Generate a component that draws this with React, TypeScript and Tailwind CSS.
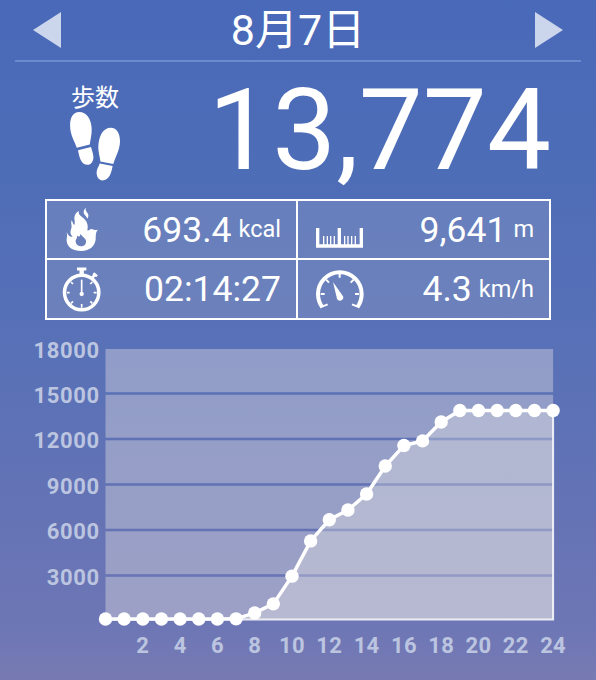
import type { ReactNode } from 'react';

// cumulative steps at each hour, 0 to 24
const steps = [
  0, 0, 0, 0, 0, 0, 0, 10, 400, 1000, 2830, 5160, 6560, 7200, 8260, 10110, 11460, 11770, 13020,
  13774, 13774, 13774, 13774, 13774, 13774,
];

const yLabels = [18000, 15000, 12000, 9000, 6000, 3000];
const xLabels = [2, 4, 6, 8, 10, 12, 14, 16, 18, 20, 22, 24];

const LEFT = 105.5;
const BASE = 279;
const STEP_X = 18.65;
const STEP_Y = 45.4;

const toX = (hour: number) => LEFT + hour * STEP_X;
const toY = (value: number) => BASE - (value / 3000) * STEP_Y;
const gridY = (value: number) => 281 - (value / 3000) * 45.5;

function FootprintsIcon() {
  return (
    <svg width="50" height="69" viewBox="0 0 50 69" fill="white">
      <path d="M9.3 0C16.5 0 21.5 7 21.7 17C21.8 23.5 20.3 27.5 19.8 32.5L6.8 35.7C4.5 29 .1 23 .1 13.5C.1 5.5 3 0 9.3 0Z" />
      <path d="M8 38.3L21 35C21.8 38.5 23.4 41.5 23.4 45C23.4 49.5 21.2 52.8 17.5 52.8C11 52.8 9.2 45 8 38.3Z" />
      <path d="M40.7 15.7C47 15.7 50 22 50 29C50 38 45.5 44.5 43.3 51.9L30.4 49.5C30 45 28.3 41 28.3 35C28.5 23.5 33.5 15.7 40.7 15.7Z" />
      <path d="M29.7 51.5L42.6 54C41.5 60.5 39.2 68.4 32.5 68.4C29 68.4 26.6 65 26.6 60.5C26.6 57 28.9 54.5 29.7 51.5Z" />
    </svg>
  );
}

function FlameIcon() {
  return (
    <svg className="ml-0.5" width="33" height="45" viewBox="78 39 99 135" fill="white">
      <path d="M138 41C134 50 143 55 145 62C146 67 144 71 141 74C141 67 131 63 131 54C131 48 135 44 138 41Z" />
      <path
        fillRule="evenodd"
        d="M117 51C113 62 125 67 134 76C143 86 145 96 142 109C147 111 150 104 155 105C162 108 167 109 174 107C166 115 168 124 167 136C165 157 149 171 124 171C99 171 82 161 80 141C79 132 83 126 80 114C85 126 92 130 98 128C89 119 91 112 94 103C97 94 91 89 95 79C99 86 99 91 103 93C107 83 101 75 104 66C106 58 112 54 117 51ZM121 119C121 127 117 130 111 125C113 132 106 136 107 144C109 153 116 157 123 157C132 157 139 151 138 141C137 131 127 129 121 119Z"
      />
    </svg>
  );
}

function StopwatchIcon() {
  return (
    <svg width="39" height="45" viewBox="64 216 117 135" fill="none" stroke="white">
      <circle cx="123" cy="292.5" r="51.5" strokeWidth="10.5" />
      <path d="M109 222H137" strokeWidth="9" />
      <path d="M123 225V242" strokeWidth="13" />
      <path d="M155 248L162 240" strokeWidth="8" />
      <path d="M158 235L169 244" strokeWidth="8" />
      <path d="M123 254V292" strokeWidth="5" />
      <path
        d="M123 338V327M79 293H87M159 293H168M91 261L97 267M155 261L149 267M91 325L97 319M155 325L149 319"
        strokeWidth="5"
      />
      <circle cx="123" cy="297" r="6.5" fill="white" stroke="none" />
    </svg>
  );
}

function RulerIcon() {
  return (
    <svg className="mt-[17px]" width="47" height="20" viewBox="63 101 141 60" fill="none" stroke="white">
      <path d="M68 101V155H199V101" strokeWidth="10" />
      <path d="M133 101V155" strokeWidth="10" />
      <path d="M86 125V152M97 125V152M107 125V152M118 125V152M149 125V152M159 125V152M170 125V152M181 125V152" strokeWidth="4" />
    </svg>
  );
}

function GaugeIcon() {
  return (
    <svg width="48" height="39" viewBox="62 224 144 117" fill="none" stroke="white">
      <path d="M81 336C73 325 68 311 68 296A65.5 65.5 0 0 1 199 296C199 311 194 325 186 336" strokeWidth="12" />
      <path d="M133 233V247M76 296H88M191 296H179M92 253L101 262M175 253L166 262M80 334L97 327M187 334L170 327" strokeWidth="6" />
      <path d="M113 260L143 303C148 314 131 322 125 310Z" fill="white" stroke="none" />
    </svg>
  );
}

function Stat({ icon, value, unit, className }: { icon: ReactNode; value: string; unit?: string; className: string }) {
  return (
    <div className={`flex items-center justify-between bg-[#e8e4e0]/15 ${className}`}>
      <div className="flex w-12 justify-center">{icon}</div>
      <div className="flex items-center gap-[7px] pt-0.5 leading-none whitespace-nowrap">
        <span className="text-[35.5px]">{value}</span>
        {unit && <span className="pb-px text-[23.5px]">{unit}</span>}
      </div>
    </div>
  );
}

function StepsChart() {
  const line = steps.map((value, hour) => `${toX(hour)},${toY(value)}`).join(' ');
  const right = toX(24);

  return (
    <svg className="block" width="596" height="350" viewBox="0 -10 596 350">
      {yLabels.map((label, i) => {
        const top = i === 0 ? 9 : gridY(label) + 1.3;
        const bottom = i === yLabels.length - 1 ? BASE : gridY(label - 3000) - 1.3;
        return (
          <rect key={label} x={LEFT} y={top} width={right - LEFT} height={bottom - top} className="fill-[#e6e1e0]/40" />
        );
      })}

      <polygon points={`${line} ${right},${BASE}`} className="fill-[#f6f3ea]/30" />
      <path d={`M${LEFT} ${BASE + 0.5}H${right}V${toY(13774)}`} fill="none" className="stroke-white/85" strokeWidth="2" />
      <polyline points={line} fill="none" stroke="white" strokeWidth="3.5" />
      {steps.map((value, hour) => (
        <circle key={hour} cx={toX(hour)} cy={toY(value)} r="6.7" fill="white" />
      ))}

      <g className="fill-[#bcc5e0] text-[22px] font-bold">
        {yLabels.map((label) => (
          <text key={label} x="99.7" y={toY(label) + 11} textAnchor="end" className="tracking-[0.6px]">
            {label}
          </text>
        ))}
        {xLabels.map((hour) => (
          <text key={hour} x={toX(hour)} y="313" textAnchor="middle" className="tracking-[0.3px]">
            {hour}
          </text>
        ))}
      </g>
    </svg>
  );
}

export default function App() {
  return (
    <div className="flex h-[680px] w-[596px] flex-col overflow-hidden bg-linear-[180deg,#4969b9_0%,#4e6db7_25%,#5971b7_53%,#6573b5_77%,#6f77b5_94%,#787bb2_100%] font-['Roboto','Noto_Sans_CJK_JP',sans-serif] text-white">
      <header className="mx-[15px] flex h-[62px] shrink-0 items-center justify-between border-b-2 border-[#6d89cf] px-[18px]">
        <button aria-label="Previous day">
          <svg width="28" height="36" viewBox="0 0 28 36" className="fill-[#cbd5ec]">
            <path d="M0 18L28 0V36Z" />
          </svg>
        </button>
        <h1 className="text-[43px] leading-none">8月7日</h1>
        <button aria-label="Next day">
          <svg width="28" height="36" viewBox="0 0 28 36" className="fill-[#cbd5ec]">
            <path d="M28 18L0 0V36Z" />
          </svg>
        </button>
      </header>

      <section className="flex h-[137px] shrink-0 justify-between pr-[45px] pl-[70px]">
        <div className="flex flex-col pt-[22px]">
          <h2 className="h-7 pl-px text-[24px] leading-7">歩数</h2>
          <FootprintsIcon />
        </div>
        <div className="pt-[11px] text-[114px] leading-[115px]">13,774</div>
      </section>

      <section className="mx-[45px] grid h-[121px] w-[506px] shrink-0 grid-cols-[251px_251px] grid-rows-[59px_58px] border-2 border-white">
        <Stat className="border-r-2 border-b-2 pr-[15px] pl-[10px]" icon={<FlameIcon />} value="693.4" unit="kcal" />
        <Stat className="border-b-2 pr-[15px] pl-[17.5px]" icon={<RulerIcon />} value="9,641" unit="m" />
        <Stat className="border-r-2 pr-[15px] pl-[10px]" icon={<StopwatchIcon />} value="02:14:27" />
        <Stat className="pr-[15px] pl-[17.5px]" icon={<GaugeIcon />} value="4.3" unit="km/h" />
      </section>

      <section className="mt-2.5 shrink-0">
        <StepsChart />
      </section>
    </div>
  );
}
